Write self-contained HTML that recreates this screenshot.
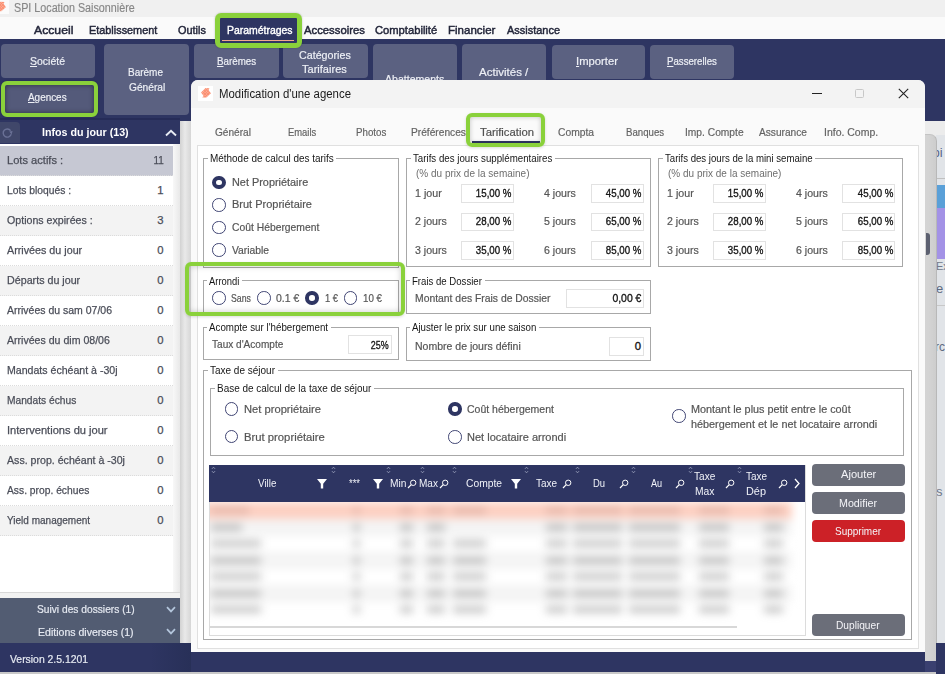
<!DOCTYPE html>
<html><head><meta charset="utf-8"><style>
html,body{margin:0;padding:0;width:945px;height:674px;overflow:hidden;}
body{position:relative;font-family:"Liberation Sans",sans-serif;}
body div, body svg{position:absolute;}
.t{white-space:nowrap;}
.r{width:13.5px;height:13.5px;box-sizing:border-box;border:1.5px solid #3f4473;border-radius:50%;background:#fff;}
.r.c{border:4px solid #2e3562;background:#fff;}
u{text-decoration:underline;text-underline-offset:1px;text-decoration-thickness:1px;}
</style></head><body>
<div style="left:0px;top:0px;width:945px;height:674px;background:#2e3562"></div>
<div style="left:0px;top:0px;width:945px;height:17px;background:#f0f0f0"></div>
<div style="left:0px;top:0px;width:8.5px;height:13.5px;background:#fbfbfb"></div>
<div class="t" style="left:14.3px;top:1.94px;font-size:12px;line-height:12px;transform:scaleX(0.8957);transform-origin:left center;color:#868686;-webkit-text-stroke:0.15px #868686">SPI Location Saisonnière</div>
<div style="left:0px;top:17px;width:945px;height:22px;background:#fafafa"></div>
<div class="t" style="left:34px;top:24.83px;font-size:11.3px;line-height:11.3px;transform:scaleX(1.0816);transform-origin:left center;color:#23263a;-webkit-text-stroke:0.45px #23263a">Accueil</div>
<div class="t" style="left:88.5px;top:24.83px;font-size:11.3px;line-height:11.3px;transform:scaleX(0.9623);transform-origin:left center;color:#23263a;-webkit-text-stroke:0.45px #23263a">Etablissement</div>
<div class="t" style="left:177.8px;top:24.83px;font-size:11.3px;line-height:11.3px;transform:scaleX(0.9659);transform-origin:left center;color:#23263a;-webkit-text-stroke:0.45px #23263a">Outils</div>
<div class="t" style="left:303.5px;top:24.83px;font-size:11.3px;line-height:11.3px;transform:scaleX(0.9998);transform-origin:left center;color:#23263a;-webkit-text-stroke:0.45px #23263a">Accessoires</div>
<div class="t" style="left:374.5px;top:24.83px;font-size:11.3px;line-height:11.3px;transform:scaleX(0.9904);transform-origin:left center;color:#23263a;-webkit-text-stroke:0.45px #23263a">Comptabilité</div>
<div class="t" style="left:447.6px;top:24.83px;font-size:11.3px;line-height:11.3px;transform:scaleX(1.0199);transform-origin:left center;color:#23263a;-webkit-text-stroke:0.45px #23263a">Financier</div>
<div class="t" style="left:507px;top:24.83px;font-size:11.3px;line-height:11.3px;transform:scaleX(0.9700);transform-origin:left center;color:#23263a;-webkit-text-stroke:0.45px #23263a">Assistance</div>
<div style="left:219px;top:17px;width:78.5px;height:26.5px;background:#2e3562"></div>
<div style="left:222px;top:39.5px;width:72px;height:1.5px;background:#f2a98c"></div>
<div class="t" style="left:227px;top:24.83px;font-size:11.3px;line-height:11.3px;transform:scaleX(0.9243);transform-origin:left center;color:#fff;-webkit-text-stroke:0.4px #fff">Paramétrages</div>
<div style="left:1px;top:44px;width:94px;height:34px;background:#5b6181;border-radius:4px;"></div>
<div class="t" style="left:29.6px;top:56.01px;font-size:11.8px;line-height:11.8px;transform:scaleX(0.8893);transform-origin:left center;color:#eef0f6;-webkit-text-stroke:0.2px #eef0f6"><u>S</u>ociété</div>
<div style="left:5px;top:85px;width:88.5px;height:28px;background:#5b6181;border-radius:4px;background:#545a7a;box-shadow:inset 0 0 5px rgba(0,0,0,.45)"></div>
<div class="t" style="left:28.1px;top:92.41px;font-size:11.8px;line-height:11.8px;transform:scaleX(0.8406);transform-origin:left center;color:#eef0f6;-webkit-text-stroke:0.2px #eef0f6"><u>A</u>gences</div>
<div style="left:104px;top:44px;width:85px;height:71px;background:#5b6181;border-radius:4px;"></div>
<div class="t" style="left:128px;top:67.31px;font-size:11.8px;line-height:11.8px;transform:scaleX(0.8471);transform-origin:left center;color:#eef0f6;-webkit-text-stroke:0.2px #eef0f6">Barème</div>
<div class="t" style="left:128.7px;top:82.11px;font-size:11.8px;line-height:11.8px;transform:scaleX(0.8647);transform-origin:left center;color:#eef0f6;-webkit-text-stroke:0.2px #eef0f6">Général</div>
<div style="left:194px;top:44px;width:84.5px;height:34px;background:#5b6181;border-radius:4px;"></div>
<div class="t" style="left:216.5px;top:55.51px;font-size:11.8px;line-height:11.8px;transform:scaleX(0.8281);transform-origin:left center;color:#eef0f6;-webkit-text-stroke:0.2px #eef0f6"><u>B</u>arèmes</div>
<div style="left:283px;top:44px;width:85px;height:34px;background:#5b6181;border-radius:4px;"></div>
<div class="t" style="left:299px;top:50.01px;font-size:11.8px;line-height:11.8px;transform:scaleX(0.9078);transform-origin:left center;color:#eef0f6;-webkit-text-stroke:0.2px #eef0f6">Catégories</div>
<div class="t" style="left:302.2px;top:64.41px;font-size:11.8px;line-height:11.8px;transform:scaleX(0.9359);transform-origin:left center;color:#eef0f6;-webkit-text-stroke:0.2px #eef0f6">Tarifaires</div>
<div style="left:373px;top:44px;width:84px;height:76px;background:#5b6181;border-radius:4px;"></div>
<div class="t" style="left:385.2px;top:74.31px;font-size:11.8px;line-height:11.8px;transform:scaleX(0.8951);transform-origin:left center;color:#eef0f6;-webkit-text-stroke:0.2px #eef0f6">Abattements</div>
<div style="left:462px;top:44px;width:84px;height:76px;background:#5b6181;border-radius:4px;"></div>
<div class="t" style="left:479px;top:66.71px;font-size:11.8px;line-height:11.8px;transform:scaleX(0.9764);transform-origin:left center;color:#eef0f6;-webkit-text-stroke:0.2px #eef0f6">Activités /</div>
<div style="left:551.5px;top:45px;width:93.5px;height:33.5px;background:#5b6181;border-radius:4px;"></div>
<div class="t" style="left:576.2px;top:56.41px;font-size:11.8px;line-height:11.8px;transform:scaleX(0.9537);transform-origin:left center;color:#eef0f6;-webkit-text-stroke:0.2px #eef0f6"><u>I</u>mporter</div>
<div style="left:649.5px;top:45px;width:84.79999999999995px;height:33.5px;background:#5b6181;border-radius:4px;"></div>
<div class="t" style="left:666.7px;top:56.41px;font-size:11.8px;line-height:11.8px;transform:scaleX(0.8181);transform-origin:left center;color:#eef0f6;-webkit-text-stroke:0.2px #eef0f6"><u>P</u>asserelles</div>
<div style="left:0px;top:121px;width:179.5px;height:22.5px;background:#2e3562"></div>
<div style="left:0px;top:118px;width:179.5px;height:2px;background:#262c58"></div>
<div style="left:0px;top:122px;width:19.7px;height:20.599999999999994px;background:#40476a;border-radius:0 4px 0 0"></div>
<svg style="position:absolute;left:2px;top:128px" width="12" height="11" viewBox="0 0 12 11"><path d="M9.2 6.3 A4.1 4.1 0 1 1 8.6 2.6" fill="none" stroke="#6a7196" stroke-width="1.4"/><path d="M7.2 3.6 L10.6 3 L9.6 6.6 Z" fill="#6a7196"/></svg>
<div class="t" style="left:41.5px;top:125.78px;font-size:11.6px;line-height:11.6px;transform:scaleX(0.9215);transform-origin:left center;color:#fff;font-weight:bold">Infos du jour (13)</div>
<svg style="position:absolute;left:165px;top:128.5px" width="12" height="8" viewBox="0 0 12 8"><path d="M1 6.5 L6 1.8 L11 6.5" fill="none" stroke="#e8ecf4" stroke-width="1.9"/></svg>
<div style="left:179.5px;top:121px;width:11.0px;height:522px;background:linear-gradient(90deg,#d2d2d2,#e9e9e9 45%,#d6d6d6)"></div>
<div style="left:0px;top:143.5px;width:179.5px;height:454.5px;background:#ffffff"></div>
<div style="left:0px;top:145.5px;width:172.5px;height:30.0px;background:#c6c8d3"></div>
<div style="left:0px;top:175.0px;width:172.5px;height:1.0px;border-top:1px dotted #dcdcdc;box-sizing:border-box"></div>
<div class="t" style="left:6.7px;top:155.23px;font-size:11.3px;line-height:11.3px;transform:scaleX(0.9833);transform-origin:left center;color:#4a4d58;-webkit-text-stroke:0.25px #4a4d58">Lots actifs :</div>
<div class="t" style="right:781.5px;top:155.23px;font-size:11.3px;line-height:11.3px;text-align:right;transform:scaleX(0.8781);transform-origin:right center;color:#4a4d58;-webkit-text-stroke:0.25px #4a4d58">11</div>
<div style="left:0px;top:175.5px;width:172.5px;height:30.0px;background:#ffffff"></div>
<div style="left:0px;top:205.0px;width:172.5px;height:1.0px;border-top:1px dotted #dcdcdc;box-sizing:border-box"></div>
<div class="t" style="left:6.7px;top:185.23px;font-size:11.3px;line-height:11.3px;transform:scaleX(0.9125);transform-origin:left center;color:#4a4d58;-webkit-text-stroke:0.25px #4a4d58">Lots bloqués :</div>
<div class="t" style="right:781.5px;top:185.23px;font-size:11.3px;line-height:11.3px;text-align:right;color:#4a4d58;-webkit-text-stroke:0.25px #4a4d58">1</div>
<div style="left:0px;top:205.5px;width:172.5px;height:30.0px;background:#f3f3f3"></div>
<div style="left:0px;top:235.0px;width:172.5px;height:1.0px;border-top:1px dotted #dcdcdc;box-sizing:border-box"></div>
<div class="t" style="left:6.7px;top:215.23px;font-size:11.3px;line-height:11.3px;transform:scaleX(0.9410);transform-origin:left center;color:#4a4d58;-webkit-text-stroke:0.25px #4a4d58">Options expirées :</div>
<div class="t" style="right:781.5px;top:215.23px;font-size:11.3px;line-height:11.3px;text-align:right;color:#4a4d58;-webkit-text-stroke:0.25px #4a4d58">3</div>
<div style="left:0px;top:235.5px;width:172.5px;height:30.0px;background:#ffffff"></div>
<div style="left:0px;top:265.0px;width:172.5px;height:1.0px;border-top:1px dotted #dcdcdc;box-sizing:border-box"></div>
<div class="t" style="left:6.7px;top:245.23px;font-size:11.3px;line-height:11.3px;transform:scaleX(0.9503);transform-origin:left center;color:#4a4d58;-webkit-text-stroke:0.25px #4a4d58">Arrivées du jour</div>
<div class="t" style="right:781.5px;top:245.23px;font-size:11.3px;line-height:11.3px;text-align:right;color:#4a4d58;-webkit-text-stroke:0.25px #4a4d58">0</div>
<div style="left:0px;top:265.5px;width:172.5px;height:30.0px;background:#f3f3f3"></div>
<div style="left:0px;top:295.0px;width:172.5px;height:1.0px;border-top:1px dotted #dcdcdc;box-sizing:border-box"></div>
<div class="t" style="left:6.7px;top:275.23px;font-size:11.3px;line-height:11.3px;transform:scaleX(0.9475);transform-origin:left center;color:#4a4d58;-webkit-text-stroke:0.25px #4a4d58">Départs du jour</div>
<div class="t" style="right:781.5px;top:275.23px;font-size:11.3px;line-height:11.3px;text-align:right;color:#4a4d58;-webkit-text-stroke:0.25px #4a4d58">0</div>
<div style="left:0px;top:295.5px;width:172.5px;height:30.0px;background:#ffffff"></div>
<div style="left:0px;top:325.0px;width:172.5px;height:1.0px;border-top:1px dotted #dcdcdc;box-sizing:border-box"></div>
<div class="t" style="left:6.7px;top:305.23px;font-size:11.3px;line-height:11.3px;transform:scaleX(0.9288);transform-origin:left center;color:#4a4d58;-webkit-text-stroke:0.25px #4a4d58">Arrivées du sam 07/06</div>
<div class="t" style="right:781.5px;top:305.23px;font-size:11.3px;line-height:11.3px;text-align:right;color:#4a4d58;-webkit-text-stroke:0.25px #4a4d58">0</div>
<div style="left:0px;top:325.5px;width:172.5px;height:30.0px;background:#f3f3f3"></div>
<div style="left:0px;top:355.0px;width:172.5px;height:1.0px;border-top:1px dotted #dcdcdc;box-sizing:border-box"></div>
<div class="t" style="left:6.7px;top:335.23px;font-size:11.3px;line-height:11.3px;transform:scaleX(0.9362);transform-origin:left center;color:#4a4d58;-webkit-text-stroke:0.25px #4a4d58">Arrivées du dim 08/06</div>
<div class="t" style="right:781.5px;top:335.23px;font-size:11.3px;line-height:11.3px;text-align:right;color:#4a4d58;-webkit-text-stroke:0.25px #4a4d58">0</div>
<div style="left:0px;top:355.5px;width:172.5px;height:30.0px;background:#ffffff"></div>
<div style="left:0px;top:385.0px;width:172.5px;height:1.0px;border-top:1px dotted #dcdcdc;box-sizing:border-box"></div>
<div class="t" style="left:6.7px;top:365.23px;font-size:11.3px;line-height:11.3px;transform:scaleX(0.9365);transform-origin:left center;color:#4a4d58;-webkit-text-stroke:0.25px #4a4d58">Mandats échéant à -30j</div>
<div class="t" style="right:781.5px;top:365.23px;font-size:11.3px;line-height:11.3px;text-align:right;color:#4a4d58;-webkit-text-stroke:0.25px #4a4d58">0</div>
<div style="left:0px;top:385.5px;width:172.5px;height:30.0px;background:#f3f3f3"></div>
<div style="left:0px;top:415.0px;width:172.5px;height:1.0px;border-top:1px dotted #dcdcdc;box-sizing:border-box"></div>
<div class="t" style="left:6.7px;top:395.23px;font-size:11.3px;line-height:11.3px;transform:scaleX(0.9043);transform-origin:left center;color:#4a4d58;-webkit-text-stroke:0.25px #4a4d58">Mandats échus</div>
<div class="t" style="right:781.5px;top:395.23px;font-size:11.3px;line-height:11.3px;text-align:right;color:#4a4d58;-webkit-text-stroke:0.25px #4a4d58">0</div>
<div style="left:0px;top:415.5px;width:172.5px;height:30.0px;background:#ffffff"></div>
<div style="left:0px;top:445.0px;width:172.5px;height:1.0px;border-top:1px dotted #dcdcdc;box-sizing:border-box"></div>
<div class="t" style="left:6.7px;top:425.23px;font-size:11.3px;line-height:11.3px;transform:scaleX(0.9825);transform-origin:left center;color:#4a4d58;-webkit-text-stroke:0.25px #4a4d58">Interventions du jour</div>
<div class="t" style="right:781.5px;top:425.23px;font-size:11.3px;line-height:11.3px;text-align:right;color:#4a4d58;-webkit-text-stroke:0.25px #4a4d58">0</div>
<div style="left:0px;top:445.5px;width:172.5px;height:30.0px;background:#f3f3f3"></div>
<div style="left:0px;top:475.0px;width:172.5px;height:1.0px;border-top:1px dotted #dcdcdc;box-sizing:border-box"></div>
<div class="t" style="left:6.7px;top:455.23px;font-size:11.3px;line-height:11.3px;transform:scaleX(0.9393);transform-origin:left center;color:#4a4d58;-webkit-text-stroke:0.25px #4a4d58">Ass. prop. échéant à -30j</div>
<div class="t" style="right:781.5px;top:455.23px;font-size:11.3px;line-height:11.3px;text-align:right;color:#4a4d58;-webkit-text-stroke:0.25px #4a4d58">0</div>
<div style="left:0px;top:475.5px;width:172.5px;height:30.0px;background:#ffffff"></div>
<div style="left:0px;top:505.0px;width:172.5px;height:1.0px;border-top:1px dotted #dcdcdc;box-sizing:border-box"></div>
<div class="t" style="left:6.7px;top:485.23px;font-size:11.3px;line-height:11.3px;transform:scaleX(0.9099);transform-origin:left center;color:#4a4d58;-webkit-text-stroke:0.25px #4a4d58">Ass. prop. échues</div>
<div class="t" style="right:781.5px;top:485.23px;font-size:11.3px;line-height:11.3px;text-align:right;color:#4a4d58;-webkit-text-stroke:0.25px #4a4d58">0</div>
<div style="left:0px;top:505.5px;width:172.5px;height:30.0px;background:#f3f3f3"></div>
<div style="left:0px;top:535.0px;width:172.5px;height:1.0px;border-top:1px dotted #dcdcdc;box-sizing:border-box"></div>
<div class="t" style="left:6.7px;top:515.23px;font-size:11.3px;line-height:11.3px;transform:scaleX(0.8859);transform-origin:left center;color:#4a4d58;-webkit-text-stroke:0.25px #4a4d58">Yield management</div>
<div class="t" style="right:781.5px;top:515.23px;font-size:11.3px;line-height:11.3px;text-align:right;color:#4a4d58;-webkit-text-stroke:0.25px #4a4d58">0</div>
<div style="left:172.5px;top:143.5px;width:7.0px;height:448.5px;background:linear-gradient(90deg,#f8f8f8,#e8e8e8)"></div>
<div style="left:0px;top:592px;width:179.5px;height:1px;background:#d8d8d8"></div>
<div style="left:0px;top:593px;width:179.5px;height:5px;background:#f2f2f2"></div>
<div style="left:0px;top:598px;width:179.5px;height:45px;background:#525c72"></div>
<div class="t" style="left:36.6px;top:603.48px;font-size:11.6px;line-height:11.6px;transform:scaleX(0.8811);transform-origin:left center;color:#e6eaf2;-webkit-text-stroke:0.2px #e6eaf2">Suivi des dossiers (1)</div>
<div class="t" style="left:37.7px;top:626.38px;font-size:11.6px;line-height:11.6px;transform:scaleX(0.9098);transform-origin:left center;color:#e6eaf2;-webkit-text-stroke:0.2px #e6eaf2">Editions diverses (1)</div>
<svg style="position:absolute;left:165.5px;top:605.5px" width="10" height="7" viewBox="0 0 10 7"><path d="M1 1.2 L5 5.4 L9 1.2" fill="none" stroke="#b4c6dc" stroke-width="1.7"/></svg>
<svg style="position:absolute;left:165.5px;top:628px" width="10" height="7" viewBox="0 0 10 7"><path d="M1 1.2 L5 5.4 L9 1.2" fill="none" stroke="#b4c6dc" stroke-width="1.7"/></svg>
<div style="left:0px;top:643px;width:945px;height:29.299999999999955px;background:#2e3562"></div>
<div style="left:150px;top:643px;width:40.5px;height:29.299999999999955px;background:linear-gradient(90deg,#2e3562,#283058)"></div>
<div style="left:0px;top:672.3px;width:945px;height:1.7000000000000455px;background:#c8c8c8"></div>
<div class="t" style="left:9.5px;top:653.18px;font-size:11.6px;line-height:11.6px;transform:scaleX(0.8970);transform-origin:left center;color:#e6eaf2;-webkit-text-stroke:0.2px #e6eaf2">Version 2.5.1201</div>
<div style="left:924.5px;top:121px;width:20.5px;height:522px;background:#ececec"></div>
<div style="left:936px;top:135px;width:9px;height:508px;background:#e1e4e8"></div>
<div class="t" style="left:932.5px;top:145.50px;font-size:13px;line-height:13px;color:#56648a">pi</div>
<div style="left:936px;top:178px;width:9px;height:1px;background:#c0c0c0"></div>
<div style="left:936px;top:185px;width:9px;height:23px;background:#5aa0d8"></div>
<div style="left:936px;top:208px;width:9px;height:51px;background:#a392e6"></div>
<div class="t" style="left:936px;top:261.19px;font-size:11px;line-height:11px;color:#707888">Ex</div>
<div class="t" style="left:936px;top:281.50px;font-size:13px;line-height:13px;color:#606a80">e</div>
<div style="left:936px;top:305px;width:9px;height:1px;background:#c8c8c8"></div>
<div class="t" style="left:935px;top:340.84px;font-size:12px;line-height:12px;color:#606a80">rc</div>
<div class="t" style="left:936px;top:485.00px;font-size:13px;line-height:13px;color:#707888">s</div>
<div style="left:924.5px;top:133.5px;width:12.0px;height:527.5px;background:linear-gradient(90deg,#d4d4d4,#d2d2d2 50%,#cdcdcd);border-top:1px solid #c4c4c4;border-right:1px solid #b8b8b8;box-sizing:border-box;border-radius:0 7px 0 0"></div>
<div style="left:925.5px;top:232.5px;width:4.5px;height:22.5px;background:#5c6070;border-radius:0 3px 3px 0"></div>
<div style="left:936px;top:643px;width:9px;height:31px;background:#2e3562"></div>
<div style="left:925px;top:661px;width:11px;height:11px;background:#3a4070"></div>
<div style="left:190.5px;top:79.5px;width:734.0px;height:572.8px;background:#fafafa;border-radius:7px 7px 0 0"></div>
<div style="left:190.5px;top:79.5px;width:734.0px;height:28.0px;background:#f3f3f3;border-radius:7px 7px 0 0"></div>
<div style="left:198px;top:85.5px;width:15px;height:15.0px;background:#ffffff"></div>
<svg style="position:absolute;left:0;top:0" width="945" height="674"><defs><pattern id="chk" width="2" height="2" patternUnits="userSpaceOnUse" patternTransform="rotate(45)"><rect width="2" height="2" fill="#fb8e70"/><rect width="1" height="1" fill="#fdc2b0"/></pattern></defs><polygon points="205.50,88.00 209.60,88.30 208.50,90.10 211.00,93.30 206.40,97.60 202.30,97.40 203.50,95.70 201.00,92.50" fill="url(#chk)"/><polygon points="0.50,1.70 4.60,2.00 3.50,3.80 6.00,7.00 1.40,11.30 -2.70,11.10 -1.50,9.40 -4.00,6.20" fill="url(#chk)"/></svg>
<div class="t" style="left:218.5px;top:87.69px;font-size:12.3px;line-height:12.3px;transform:scaleX(0.9261);transform-origin:left center;color:#1b1b1b">Modification d'une agence</div>
<div style="left:812px;top:93px;width:10px;height:1.2000000000000028px;background:#222"></div>
<div style="left:855px;top:88.5px;width:9px;height:9.299999999999997px;border:1px solid #c8c8c8;border-radius:1.5px;box-sizing:border-box"></div>
<svg style="position:absolute;left:897.5px;top:88px" width="11" height="11" viewBox="0 0 11 11"><path d="M0.8 0.8 L10.2 10.2 M10.2 0.8 L0.8 10.2" stroke="#222" stroke-width="1.1"/></svg>
<div class="t" style="left:215.4px;top:126.48px;font-size:11.6px;line-height:11.6px;transform:scaleX(0.8724);transform-origin:left center;color:#636363;-webkit-text-stroke:0.2px #636363">Général</div>
<div class="t" style="left:287.8px;top:126.48px;font-size:11.6px;line-height:11.6px;transform:scaleX(0.8102);transform-origin:left center;color:#636363;-webkit-text-stroke:0.2px #636363">Emails</div>
<div class="t" style="left:355.5px;top:126.48px;font-size:11.6px;line-height:11.6px;transform:scaleX(0.8390);transform-origin:left center;color:#636363;-webkit-text-stroke:0.2px #636363">Photos</div>
<div class="t" style="left:411px;top:126.48px;font-size:11.6px;line-height:11.6px;transform:scaleX(0.8794);transform-origin:left center;color:#636363;-webkit-text-stroke:0.2px #636363">Préférences</div>
<div class="t" style="left:558px;top:126.48px;font-size:11.6px;line-height:11.6px;transform:scaleX(0.8864);transform-origin:left center;color:#636363;-webkit-text-stroke:0.2px #636363">Compta</div>
<div class="t" style="left:626.4px;top:126.48px;font-size:11.6px;line-height:11.6px;transform:scaleX(0.8320);transform-origin:left center;color:#636363;-webkit-text-stroke:0.2px #636363">Banques</div>
<div class="t" style="left:684.8px;top:126.48px;font-size:11.6px;line-height:11.6px;transform:scaleX(0.8826);transform-origin:left center;color:#636363;-webkit-text-stroke:0.2px #636363">Imp. Compte</div>
<div class="t" style="left:758.8px;top:126.48px;font-size:11.6px;line-height:11.6px;transform:scaleX(0.8759);transform-origin:left center;color:#636363;-webkit-text-stroke:0.2px #636363">Assurance</div>
<div class="t" style="left:823.7px;top:126.48px;font-size:11.6px;line-height:11.6px;transform:scaleX(0.9040);transform-origin:left center;color:#636363;-webkit-text-stroke:0.2px #636363">Info. Comp.</div>
<div style="left:471.5px;top:141px;width:68.5px;height:2px;background:#2e3562"></div>
<div class="t" style="left:480px;top:125.88px;font-size:11.6px;line-height:11.6px;transform:scaleX(0.9740);transform-origin:left center;color:#505050;-webkit-text-stroke:0.2px #505050">Tarification</div>
<div style="left:196.5px;top:145px;width:722.5px;height:503.5px;border:1px solid #e0e0e0;box-sizing:border-box;background:#fff"></div>
<div style="left:202.5px;top:157.5px;width:196.5px;height:110.0px;border:1px solid #a8a8a8;box-sizing:border-box"></div>
<div style="left:207.5px;top:156.5px;width:128.8px;height:3.0px;background:#fff"></div>
<div class="t" style="left:209.5px;top:152.18px;font-size:11.6px;line-height:11.6px;transform:scaleX(0.8572);transform-origin:left center;color:#161616">Méthode de calcul des tarifs</div>
<div class="r c" style="left:212.25px;top:175.65px"></div>
<div class="t" style="left:231.7px;top:176.83px;font-size:11.3px;line-height:11.3px;transform:scaleX(0.9630);transform-origin:left center;color:#555;-webkit-text-stroke:0.2px #555">Net Propriétaire</div>
<div class="r" style="left:212.25px;top:198.25px"></div>
<div class="t" style="left:231.7px;top:199.43px;font-size:11.3px;line-height:11.3px;transform:scaleX(0.9724);transform-origin:left center;color:#555;-webkit-text-stroke:0.2px #555">Brut Propriétaire</div>
<div class="r" style="left:212.25px;top:220.85000000000002px"></div>
<div class="t" style="left:231.7px;top:222.03px;font-size:11.3px;line-height:11.3px;transform:scaleX(0.9144);transform-origin:left center;color:#555;-webkit-text-stroke:0.2px #555">Coût Hébergement</div>
<div class="r" style="left:212.25px;top:243.45000000000002px"></div>
<div class="t" style="left:231.7px;top:244.63px;font-size:11.3px;line-height:11.3px;transform:scaleX(0.9134);transform-origin:left center;color:#555;-webkit-text-stroke:0.2px #555">Variable</div>
<div style="left:202.5px;top:280px;width:196.5px;height:33.5px;border:1px solid #a8a8a8;box-sizing:border-box"></div>
<div style="left:206.9px;top:279px;width:35.29999999999998px;height:3px;background:#fff"></div>
<div class="t" style="left:208.9px;top:274.58px;font-size:11.6px;line-height:11.6px;transform:scaleX(0.8103);transform-origin:left center;color:#161616">Arrondi</div>
<div class="r" style="left:212.25px;top:291.15px"></div>
<div class="t" style="left:231.3px;top:292.73px;font-size:11.3px;line-height:11.3px;transform:scaleX(0.7726);transform-origin:left center;color:#555;-webkit-text-stroke:0.2px #555">Sans</div>
<div class="r" style="left:257.15px;top:291.15px"></div>
<div class="t" style="left:276.2px;top:292.73px;font-size:11.3px;line-height:11.3px;transform:scaleX(0.9271);transform-origin:left center;color:#555;-webkit-text-stroke:0.2px #555">0.1 €</div>
<div class="r c" style="left:305.45px;top:291.15px"></div>
<div class="t" style="left:324.9px;top:292.73px;font-size:11.3px;line-height:11.3px;transform:scaleX(0.8340);transform-origin:left center;color:#555;-webkit-text-stroke:0.2px #555">1 €</div>
<div class="r" style="left:343.95px;top:291.15px"></div>
<div class="t" style="left:363.4px;top:292.73px;font-size:11.3px;line-height:11.3px;transform:scaleX(0.8639);transform-origin:left center;color:#555;-webkit-text-stroke:0.2px #555">10 €</div>
<div style="left:202.5px;top:326.8px;width:196.5px;height:33.69999999999999px;border:1px solid #a8a8a8;box-sizing:border-box"></div>
<div style="left:206.9px;top:325.8px;width:124.1px;height:3.0px;background:#fff"></div>
<div class="t" style="left:208.9px;top:321.18px;font-size:11.6px;line-height:11.6px;transform:scaleX(0.8418);transform-origin:left center;color:#161616">Acompte sur l'hébergement</div>
<div class="t" style="left:212.3px;top:338.83px;font-size:11.3px;line-height:11.3px;transform:scaleX(0.8908);transform-origin:left center;color:#555;-webkit-text-stroke:0.2px #555">Taux d'Acompte</div>
<div style="left:348.2px;top:334.8px;width:43.400000000000034px;height:19.0px;background:#fff;border:1px solid #e2e2e2;box-sizing:border-box"></div>
<div class="t" style="right:556.2px;top:339.63px;font-size:11.3px;line-height:11.3px;text-align:right;transform:scaleX(0.7871);transform-origin:right center;color:#161616;-webkit-text-stroke:0.35px #161616">25%</div>
<div style="left:405.8px;top:158.2px;width:245.2px;height:109.30000000000001px;border:1px solid #a8a8a8;box-sizing:border-box"></div>
<div style="left:410.6px;top:157.2px;width:144.39999999999998px;height:3.0px;background:#fff"></div>
<div class="t" style="left:412.6px;top:151.68px;font-size:11.6px;line-height:11.6px;transform:scaleX(0.8381);transform-origin:left center;color:#161616">Tarifs des jours supplémentaires</div>
<div class="t" style="left:415.5px;top:167.73px;font-size:11.3px;line-height:11.3px;transform:scaleX(0.8859);transform-origin:left center;color:#6e6e6e">(% du prix de la semaine)</div>
<div class="t" style="left:415.3px;top:187.53px;font-size:11.3px;line-height:11.3px;transform:scaleX(0.9446);transform-origin:left center;color:#555;-webkit-text-stroke:0.2px #555">1 jour</div>
<div style="left:461.2px;top:184.0px;width:52.50000000000006px;height:18.80000000000001px;background:#fff;border:1px solid #e2e2e2;box-sizing:border-box"></div>
<div class="t" style="right:433.3px;top:187.73px;font-size:11.3px;line-height:11.3px;text-align:right;transform:scaleX(0.8586);transform-origin:right center;color:#161616;-webkit-text-stroke:0.35px #161616">15,00 %</div>
<div class="t" style="left:544.3px;top:187.53px;font-size:11.3px;line-height:11.3px;transform:scaleX(0.9376);transform-origin:left center;color:#555;-webkit-text-stroke:0.2px #555">4 jours</div>
<div style="left:590.6px;top:184.0px;width:53.0px;height:18.80000000000001px;background:#fff;border:1px solid #e2e2e2;box-sizing:border-box"></div>
<div class="t" style="right:303.4px;top:187.73px;font-size:11.3px;line-height:11.3px;text-align:right;transform:scaleX(0.8586);transform-origin:right center;color:#161616;-webkit-text-stroke:0.35px #161616">45,00 %</div>
<div class="t" style="left:415.3px;top:216.03px;font-size:11.3px;line-height:11.3px;transform:scaleX(0.9376);transform-origin:left center;color:#555;-webkit-text-stroke:0.2px #555">2 jours</div>
<div style="left:461.2px;top:212.5px;width:52.50000000000006px;height:18.80000000000001px;background:#fff;border:1px solid #e2e2e2;box-sizing:border-box"></div>
<div class="t" style="right:433.3px;top:216.23px;font-size:11.3px;line-height:11.3px;text-align:right;transform:scaleX(0.8586);transform-origin:right center;color:#161616;-webkit-text-stroke:0.35px #161616">28,00 %</div>
<div class="t" style="left:544.3px;top:216.03px;font-size:11.3px;line-height:11.3px;transform:scaleX(0.9376);transform-origin:left center;color:#555;-webkit-text-stroke:0.2px #555">5 jours</div>
<div style="left:590.6px;top:212.5px;width:53.0px;height:18.80000000000001px;background:#fff;border:1px solid #e2e2e2;box-sizing:border-box"></div>
<div class="t" style="right:303.4px;top:216.23px;font-size:11.3px;line-height:11.3px;text-align:right;transform:scaleX(0.8586);transform-origin:right center;color:#161616;-webkit-text-stroke:0.35px #161616">65,00 %</div>
<div class="t" style="left:415.3px;top:244.53px;font-size:11.3px;line-height:11.3px;transform:scaleX(0.9376);transform-origin:left center;color:#555;-webkit-text-stroke:0.2px #555">3 jours</div>
<div style="left:461.2px;top:241.0px;width:52.50000000000006px;height:18.80000000000001px;background:#fff;border:1px solid #e2e2e2;box-sizing:border-box"></div>
<div class="t" style="right:433.3px;top:244.73px;font-size:11.3px;line-height:11.3px;text-align:right;transform:scaleX(0.8586);transform-origin:right center;color:#161616;-webkit-text-stroke:0.35px #161616">35,00 %</div>
<div class="t" style="left:544.3px;top:244.53px;font-size:11.3px;line-height:11.3px;transform:scaleX(0.9376);transform-origin:left center;color:#555;-webkit-text-stroke:0.2px #555">6 jours</div>
<div style="left:590.6px;top:241.0px;width:53.0px;height:18.80000000000001px;background:#fff;border:1px solid #e2e2e2;box-sizing:border-box"></div>
<div class="t" style="right:303.4px;top:244.73px;font-size:11.3px;line-height:11.3px;text-align:right;transform:scaleX(0.8586);transform-origin:right center;color:#161616;-webkit-text-stroke:0.35px #161616">85,00 %</div>
<div style="left:657.5px;top:158.2px;width:245.5px;height:109.30000000000001px;border:1px solid #a8a8a8;box-sizing:border-box"></div>
<div style="left:662.7px;top:157.2px;width:152.69999999999993px;height:3.0px;background:#fff"></div>
<div class="t" style="left:664.7px;top:151.68px;font-size:11.6px;line-height:11.6px;transform:scaleX(0.8301);transform-origin:left center;color:#161616">Tarifs des jours de la mini semaine</div>
<div class="t" style="left:667.6px;top:167.73px;font-size:11.3px;line-height:11.3px;transform:scaleX(0.8851);transform-origin:left center;color:#6e6e6e">(% du prix de la semaine)</div>
<div class="t" style="left:667.0px;top:187.53px;font-size:11.3px;line-height:11.3px;transform:scaleX(0.9446);transform-origin:left center;color:#555;-webkit-text-stroke:0.2px #555">1 jour</div>
<div style="left:713.2px;top:184.0px;width:52.5px;height:18.80000000000001px;background:#fff;border:1px solid #e2e2e2;box-sizing:border-box"></div>
<div class="t" style="right:181.29999999999995px;top:187.73px;font-size:11.3px;line-height:11.3px;text-align:right;transform:scaleX(0.8586);transform-origin:right center;color:#161616;-webkit-text-stroke:0.35px #161616">15,00 %</div>
<div class="t" style="left:796.4px;top:187.53px;font-size:11.3px;line-height:11.3px;transform:scaleX(0.9376);transform-origin:left center;color:#555;-webkit-text-stroke:0.2px #555">4 jours</div>
<div style="left:842.3px;top:184.0px;width:53.0px;height:18.80000000000001px;background:#fff;border:1px solid #e2e2e2;box-sizing:border-box"></div>
<div class="t" style="right:51.700000000000045px;top:187.73px;font-size:11.3px;line-height:11.3px;text-align:right;transform:scaleX(0.8586);transform-origin:right center;color:#161616;-webkit-text-stroke:0.35px #161616">45,00 %</div>
<div class="t" style="left:667.0px;top:216.03px;font-size:11.3px;line-height:11.3px;transform:scaleX(0.9376);transform-origin:left center;color:#555;-webkit-text-stroke:0.2px #555">2 jours</div>
<div style="left:713.2px;top:212.5px;width:52.5px;height:18.80000000000001px;background:#fff;border:1px solid #e2e2e2;box-sizing:border-box"></div>
<div class="t" style="right:181.29999999999995px;top:216.23px;font-size:11.3px;line-height:11.3px;text-align:right;transform:scaleX(0.8586);transform-origin:right center;color:#161616;-webkit-text-stroke:0.35px #161616">28,00 %</div>
<div class="t" style="left:796.4px;top:216.03px;font-size:11.3px;line-height:11.3px;transform:scaleX(0.9376);transform-origin:left center;color:#555;-webkit-text-stroke:0.2px #555">5 jours</div>
<div style="left:842.3px;top:212.5px;width:53.0px;height:18.80000000000001px;background:#fff;border:1px solid #e2e2e2;box-sizing:border-box"></div>
<div class="t" style="right:51.700000000000045px;top:216.23px;font-size:11.3px;line-height:11.3px;text-align:right;transform:scaleX(0.8586);transform-origin:right center;color:#161616;-webkit-text-stroke:0.35px #161616">65,00 %</div>
<div class="t" style="left:667.0px;top:244.53px;font-size:11.3px;line-height:11.3px;transform:scaleX(0.9376);transform-origin:left center;color:#555;-webkit-text-stroke:0.2px #555">3 jours</div>
<div style="left:713.2px;top:241.0px;width:52.5px;height:18.80000000000001px;background:#fff;border:1px solid #e2e2e2;box-sizing:border-box"></div>
<div class="t" style="right:181.29999999999995px;top:244.73px;font-size:11.3px;line-height:11.3px;text-align:right;transform:scaleX(0.8586);transform-origin:right center;color:#161616;-webkit-text-stroke:0.35px #161616">35,00 %</div>
<div class="t" style="left:796.4px;top:244.53px;font-size:11.3px;line-height:11.3px;transform:scaleX(0.9376);transform-origin:left center;color:#555;-webkit-text-stroke:0.2px #555">6 jours</div>
<div style="left:842.3px;top:241.0px;width:53.0px;height:18.80000000000001px;background:#fff;border:1px solid #e2e2e2;box-sizing:border-box"></div>
<div class="t" style="right:51.700000000000045px;top:244.73px;font-size:11.3px;line-height:11.3px;text-align:right;transform:scaleX(0.8586);transform-origin:right center;color:#161616;-webkit-text-stroke:0.35px #161616">85,00 %</div>
<div style="left:405.6px;top:280.3px;width:245.39999999999998px;height:34.0px;border:1px solid #a8a8a8;box-sizing:border-box"></div>
<div style="left:410.1px;top:279.3px;width:74.89999999999998px;height:3.0px;background:#fff"></div>
<div class="t" style="left:412.1px;top:274.88px;font-size:11.6px;line-height:11.6px;transform:scaleX(0.8278);transform-origin:left center;color:#161616">Frais de Dossier</div>
<div class="t" style="left:414.8px;top:292.83px;font-size:11.3px;line-height:11.3px;transform:scaleX(0.9181);transform-origin:left center;color:#555;-webkit-text-stroke:0.2px #555">Montant des Frais de Dossier</div>
<div style="left:566.4px;top:288.5px;width:77.39999999999998px;height:19.30000000000001px;background:#fff;border:1px solid #e2e2e2;box-sizing:border-box"></div>
<div class="t" style="right:304px;top:292.63px;font-size:11.3px;line-height:11.3px;text-align:right;transform:scaleX(0.9231);transform-origin:right center;color:#161616;-webkit-text-stroke:0.35px #161616">0,00 €</div>
<div style="left:405.6px;top:326.5px;width:245.39999999999998px;height:34.69999999999999px;border:1px solid #a8a8a8;box-sizing:border-box"></div>
<div style="left:409.8px;top:325.5px;width:129.40000000000003px;height:3.0px;background:#fff"></div>
<div class="t" style="left:411.8px;top:320.58px;font-size:11.6px;line-height:11.6px;transform:scaleX(0.8353);transform-origin:left center;color:#161616">Ajuster le prix sur une saison</div>
<div class="t" style="left:415.2px;top:340.63px;font-size:11.3px;line-height:11.3px;transform:scaleX(0.9307);transform-origin:left center;color:#555;-webkit-text-stroke:0.2px #555">Nombre de jours défini</div>
<div style="left:609.4px;top:336.8px;width:34.39999999999998px;height:19.0px;background:#fff;border:1px solid #e2e2e2;box-sizing:border-box"></div>
<div class="t" style="right:304px;top:340.93px;font-size:11.3px;line-height:11.3px;text-align:right;color:#161616;-webkit-text-stroke:0.35px #161616">0</div>
<div style="left:202.6px;top:369.8px;width:709.6px;height:270.7px;border:1px solid #a8a8a8;box-sizing:border-box"></div>
<div style="left:207.5px;top:368.8px;width:70.0px;height:3.0px;background:#fff"></div>
<div class="t" style="left:209.5px;top:363.98px;font-size:11.6px;line-height:11.6px;transform:scaleX(0.8616);transform-origin:left center;color:#161616">Taxe de séjour</div>
<div style="left:210.1px;top:387.5px;width:694.1999999999999px;height:68.5px;border:1px solid #a8a8a8;box-sizing:border-box"></div>
<div style="left:214.5px;top:386.5px;width:159.5px;height:3.0px;background:#fff"></div>
<div class="t" style="left:216.5px;top:381.88px;font-size:11.6px;line-height:11.6px;transform:scaleX(0.8588);transform-origin:left center;color:#161616">Base de calcul de la taxe de séjour</div>
<div class="r" style="left:224.55px;top:402.05px"></div>
<div class="t" style="left:244px;top:403.73px;font-size:11.3px;line-height:11.3px;transform:scaleX(0.9887);transform-origin:left center;color:#555;-webkit-text-stroke:0.2px #555">Net propriétaire</div>
<div class="r" style="left:224.55px;top:429.95px"></div>
<div class="t" style="left:244px;top:431.63px;font-size:11.3px;line-height:11.3px;transform:scaleX(0.9985);transform-origin:left center;color:#555;-webkit-text-stroke:0.2px #555">Brut propriétaire</div>
<div class="r c" style="left:448.15px;top:402.15px"></div>
<div class="t" style="left:467.4px;top:403.83px;font-size:11.3px;line-height:11.3px;transform:scaleX(0.9285);transform-origin:left center;color:#555;-webkit-text-stroke:0.2px #555">Coût hébergement</div>
<div class="r" style="left:448.15px;top:430.25px"></div>
<div class="t" style="left:467.4px;top:431.83px;font-size:11.3px;line-height:11.3px;transform:scaleX(0.9750);transform-origin:left center;color:#555;-webkit-text-stroke:0.2px #555">Net locataire arrondi</div>
<div class="r" style="left:672.05px;top:409.45px"></div>
<div class="t" style="left:691.4px;top:403.63px;font-size:11.3px;line-height:11.3px;transform:scaleX(0.9594);transform-origin:left center;color:#555;-webkit-text-stroke:0.2px #555">Montant le plus petit entre le coût</div>
<div class="t" style="left:691.4px;top:418.83px;font-size:11.3px;line-height:11.3px;transform:scaleX(0.9598);transform-origin:left center;color:#555;-webkit-text-stroke:0.2px #555">hébergement et le net locataire arrondi</div>
<div style="left:208.5px;top:464.5px;width:597.5px;height:171.0px;background:#fff;border:1px solid #dcdcdc;box-sizing:border-box"></div>
<div style="left:208.5px;top:464.5px;width:596.5px;height:37.0px;background:#2e3562"></div>
<div style="left:209.5px;top:501.8px;width:595px;height:122px;overflow:hidden"><div style="left:-9.5px;top:-11.8px;width:620px;height:140px;filter:blur(4.5px)"><div style="left:0px;top:11.800000000000011px;width:592px;height:17.19999999999999px;background:#fdd0c2"></div><div style="left:0px;top:29px;width:592px;height:16.5px;background:#f4f4f4"></div><div style="left:0px;top:62px;width:592px;height:16.5px;background:#f4f4f4"></div><div style="left:0px;top:95px;width:592px;height:16.5px;background:#f4f4f4"></div><div style="left:11px;top:17.19999999999999px;width:38.400000000000006px;height:7.000000000000057px;background:rgba(150,100,90,.22)"></div><div style="left:253px;top:17.19999999999999px;width:33px;height:7.000000000000057px;background:rgba(150,100,90,.22)"></div><div style="left:200px;top:17.19999999999999px;width:13px;height:7.000000000000057px;background:rgba(150,100,90,.22)"></div><div style="left:227px;top:17.19999999999999px;width:17.69999999999999px;height:7.000000000000057px;background:rgba(150,100,90,.22)"></div><div style="left:346.29999999999995px;top:17.19999999999999px;width:20.600000000000023px;height:7.000000000000057px;background:rgba(150,100,90,.22)"></div><div style="left:373.29999999999995px;top:17.19999999999999px;width:49.200000000000045px;height:7.000000000000057px;background:rgba(150,100,90,.22)"></div><div style="left:428.79999999999995px;top:17.19999999999999px;width:50.80000000000007px;height:7.000000000000057px;background:rgba(150,100,90,.22)"></div><div style="left:498.70000000000005px;top:17.19999999999999px;width:30.09999999999991px;height:7.000000000000057px;background:rgba(150,100,90,.22)"></div><div style="left:563.7px;top:17.19999999999999px;width:19.09999999999991px;height:7.000000000000057px;background:rgba(150,100,90,.22)"></div><div style="left:152.60000000000002px;top:17.19999999999999px;width:7.899999999999977px;height:7.000000000000057px;background:rgba(150,100,90,.22)"></div><div style="left:11px;top:33.700000000000045px;width:30.5px;height:7.0px;background:rgba(100,100,100,.36)"></div><div style="left:200px;top:33.700000000000045px;width:13px;height:7.0px;background:rgba(100,100,100,.36)"></div><div style="left:227px;top:33.700000000000045px;width:17.69999999999999px;height:7.0px;background:rgba(100,100,100,.36)"></div><div style="left:346.29999999999995px;top:33.700000000000045px;width:20.600000000000023px;height:7.0px;background:rgba(100,100,100,.36)"></div><div style="left:373.29999999999995px;top:33.700000000000045px;width:49.200000000000045px;height:7.0px;background:rgba(100,100,100,.36)"></div><div style="left:428.79999999999995px;top:33.700000000000045px;width:50.80000000000007px;height:7.0px;background:rgba(100,100,100,.36)"></div><div style="left:498.70000000000005px;top:33.700000000000045px;width:30.09999999999991px;height:7.0px;background:rgba(100,100,100,.36)"></div><div style="left:563.7px;top:33.700000000000045px;width:19.09999999999991px;height:7.0px;background:rgba(100,100,100,.36)"></div><div style="left:152.60000000000002px;top:33.700000000000045px;width:7.899999999999977px;height:7.0px;background:rgba(100,100,100,.36)"></div><div style="left:11px;top:50.200000000000045px;width:49.5px;height:7.0px;background:rgba(100,100,100,.36)"></div><div style="left:253px;top:50.200000000000045px;width:33px;height:7.0px;background:rgba(100,100,100,.36)"></div><div style="left:200px;top:50.200000000000045px;width:13px;height:7.0px;background:rgba(100,100,100,.36)"></div><div style="left:227px;top:50.200000000000045px;width:17.69999999999999px;height:7.0px;background:rgba(100,100,100,.36)"></div><div style="left:346.29999999999995px;top:50.200000000000045px;width:20.600000000000023px;height:7.0px;background:rgba(100,100,100,.36)"></div><div style="left:373.29999999999995px;top:50.200000000000045px;width:49.200000000000045px;height:7.0px;background:rgba(100,100,100,.36)"></div><div style="left:428.79999999999995px;top:50.200000000000045px;width:50.80000000000007px;height:7.0px;background:rgba(100,100,100,.36)"></div><div style="left:498.70000000000005px;top:50.200000000000045px;width:30.09999999999991px;height:7.0px;background:rgba(100,100,100,.36)"></div><div style="left:563.7px;top:50.200000000000045px;width:19.09999999999991px;height:7.0px;background:rgba(100,100,100,.36)"></div><div style="left:152.60000000000002px;top:50.200000000000045px;width:7.899999999999977px;height:7.0px;background:rgba(100,100,100,.36)"></div><div style="left:11px;top:66.70000000000005px;width:49.5px;height:7.0px;background:rgba(100,100,100,.36)"></div><div style="left:253px;top:66.70000000000005px;width:33px;height:7.0px;background:rgba(100,100,100,.36)"></div><div style="left:200px;top:66.70000000000005px;width:13px;height:7.0px;background:rgba(100,100,100,.36)"></div><div style="left:227px;top:66.70000000000005px;width:17.69999999999999px;height:7.0px;background:rgba(100,100,100,.36)"></div><div style="left:346.29999999999995px;top:66.70000000000005px;width:20.600000000000023px;height:7.0px;background:rgba(100,100,100,.36)"></div><div style="left:373.29999999999995px;top:66.70000000000005px;width:49.200000000000045px;height:7.0px;background:rgba(100,100,100,.36)"></div><div style="left:428.79999999999995px;top:66.70000000000005px;width:50.80000000000007px;height:7.0px;background:rgba(100,100,100,.36)"></div><div style="left:498.70000000000005px;top:66.70000000000005px;width:30.09999999999991px;height:7.0px;background:rgba(100,100,100,.36)"></div><div style="left:563.7px;top:66.70000000000005px;width:19.09999999999991px;height:7.0px;background:rgba(100,100,100,.36)"></div><div style="left:152.60000000000002px;top:66.70000000000005px;width:7.899999999999977px;height:7.0px;background:rgba(100,100,100,.36)"></div><div style="left:11px;top:83.20000000000005px;width:49.5px;height:7.0px;background:rgba(100,100,100,.36)"></div><div style="left:253px;top:83.20000000000005px;width:33px;height:7.0px;background:rgba(100,100,100,.36)"></div><div style="left:200px;top:83.20000000000005px;width:13px;height:7.0px;background:rgba(100,100,100,.36)"></div><div style="left:227px;top:83.20000000000005px;width:17.69999999999999px;height:7.0px;background:rgba(100,100,100,.36)"></div><div style="left:346.29999999999995px;top:83.20000000000005px;width:20.600000000000023px;height:7.0px;background:rgba(100,100,100,.36)"></div><div style="left:373.29999999999995px;top:83.20000000000005px;width:49.200000000000045px;height:7.0px;background:rgba(100,100,100,.36)"></div><div style="left:428.79999999999995px;top:83.20000000000005px;width:50.80000000000007px;height:7.0px;background:rgba(100,100,100,.36)"></div><div style="left:498.70000000000005px;top:83.20000000000005px;width:30.09999999999991px;height:7.0px;background:rgba(100,100,100,.36)"></div><div style="left:563.7px;top:83.20000000000005px;width:19.09999999999991px;height:7.0px;background:rgba(100,100,100,.36)"></div><div style="left:152.60000000000002px;top:83.20000000000005px;width:7.899999999999977px;height:7.0px;background:rgba(100,100,100,.36)"></div><div style="left:11px;top:99.70000000000005px;width:49.5px;height:7.0px;background:rgba(100,100,100,.36)"></div><div style="left:253px;top:99.70000000000005px;width:33px;height:7.0px;background:rgba(100,100,100,.36)"></div><div style="left:200px;top:99.70000000000005px;width:13px;height:7.0px;background:rgba(100,100,100,.36)"></div><div style="left:227px;top:99.70000000000005px;width:17.69999999999999px;height:7.0px;background:rgba(100,100,100,.36)"></div><div style="left:346.29999999999995px;top:99.70000000000005px;width:20.600000000000023px;height:7.0px;background:rgba(100,100,100,.36)"></div><div style="left:373.29999999999995px;top:99.70000000000005px;width:49.200000000000045px;height:7.0px;background:rgba(100,100,100,.36)"></div><div style="left:428.79999999999995px;top:99.70000000000005px;width:50.80000000000007px;height:7.0px;background:rgba(100,100,100,.36)"></div><div style="left:498.70000000000005px;top:99.70000000000005px;width:30.09999999999991px;height:7.0px;background:rgba(100,100,100,.36)"></div><div style="left:563.7px;top:99.70000000000005px;width:19.09999999999991px;height:7.0px;background:rgba(100,100,100,.36)"></div><div style="left:152.60000000000002px;top:99.70000000000005px;width:7.899999999999977px;height:7.0px;background:rgba(100,100,100,.36)"></div><div style="left:11px;top:116.20000000000005px;width:49.5px;height:7.0px;background:rgba(100,100,100,.36)"></div><div style="left:253px;top:116.20000000000005px;width:33px;height:7.0px;background:rgba(100,100,100,.36)"></div><div style="left:200px;top:116.20000000000005px;width:13px;height:7.0px;background:rgba(100,100,100,.36)"></div><div style="left:227px;top:116.20000000000005px;width:17.69999999999999px;height:7.0px;background:rgba(100,100,100,.36)"></div><div style="left:346.29999999999995px;top:116.20000000000005px;width:20.600000000000023px;height:7.0px;background:rgba(100,100,100,.36)"></div><div style="left:373.29999999999995px;top:116.20000000000005px;width:49.200000000000045px;height:7.0px;background:rgba(100,100,100,.36)"></div><div style="left:428.79999999999995px;top:116.20000000000005px;width:50.80000000000007px;height:7.0px;background:rgba(100,100,100,.36)"></div><div style="left:498.70000000000005px;top:116.20000000000005px;width:30.09999999999991px;height:7.0px;background:rgba(100,100,100,.36)"></div><div style="left:563.7px;top:116.20000000000005px;width:19.09999999999991px;height:7.0px;background:rgba(100,100,100,.36)"></div><div style="left:152.60000000000002px;top:116.20000000000005px;width:7.899999999999977px;height:7.0px;background:rgba(100,100,100,.36)"></div></div></div>
<div style="left:210px;top:626px;width:527px;height:2px;background:#d8d8d8"></div>
<svg style="position:absolute;left:211.0px;top:466px" width="5" height="8" viewBox="0 0 5 8"><path d="M1 2.8 L2.5 1.2 L4 2.8 M1 5.2 L2.5 6.8 L4 5.2" fill="none" stroke="#9aa0bc" stroke-width="0.9"/></svg>
<svg style="position:absolute;left:330.5px;top:466px" width="5" height="8" viewBox="0 0 5 8"><path d="M1 2.8 L2.5 1.2 L4 2.8 M1 5.2 L2.5 6.8 L4 5.2" fill="none" stroke="#9aa0bc" stroke-width="0.9"/></svg>
<svg style="position:absolute;left:386.0px;top:466px" width="5" height="8" viewBox="0 0 5 8"><path d="M1 2.8 L2.5 1.2 L4 2.8 M1 5.2 L2.5 6.8 L4 5.2" fill="none" stroke="#9aa0bc" stroke-width="0.9"/></svg>
<svg style="position:absolute;left:419.8px;top:466px" width="5" height="8" viewBox="0 0 5 8"><path d="M1 2.8 L2.5 1.2 L4 2.8 M1 5.2 L2.5 6.8 L4 5.2" fill="none" stroke="#9aa0bc" stroke-width="0.9"/></svg>
<svg style="position:absolute;left:451.5px;top:466px" width="5" height="8" viewBox="0 0 5 8"><path d="M1 2.8 L2.5 1.2 L4 2.8 M1 5.2 L2.5 6.8 L4 5.2" fill="none" stroke="#9aa0bc" stroke-width="0.9"/></svg>
<svg style="position:absolute;left:524.0px;top:466px" width="5" height="8" viewBox="0 0 5 8"><path d="M1 2.8 L2.5 1.2 L4 2.8 M1 5.2 L2.5 6.8 L4 5.2" fill="none" stroke="#9aa0bc" stroke-width="0.9"/></svg>
<svg style="position:absolute;left:575.1px;top:466px" width="5" height="8" viewBox="0 0 5 8"><path d="M1 2.8 L2.5 1.2 L4 2.8 M1 5.2 L2.5 6.8 L4 5.2" fill="none" stroke="#9aa0bc" stroke-width="0.9"/></svg>
<svg style="position:absolute;left:631.0px;top:466px" width="5" height="8" viewBox="0 0 5 8"><path d="M1 2.8 L2.5 1.2 L4 2.8 M1 5.2 L2.5 6.8 L4 5.2" fill="none" stroke="#9aa0bc" stroke-width="0.9"/></svg>
<svg style="position:absolute;left:687.5px;top:466px" width="5" height="8" viewBox="0 0 5 8"><path d="M1 2.8 L2.5 1.2 L4 2.8 M1 5.2 L2.5 6.8 L4 5.2" fill="none" stroke="#9aa0bc" stroke-width="0.9"/></svg>
<svg style="position:absolute;left:737.1px;top:466px" width="5" height="8" viewBox="0 0 5 8"><path d="M1 2.8 L2.5 1.2 L4 2.8 M1 5.2 L2.5 6.8 L4 5.2" fill="none" stroke="#9aa0bc" stroke-width="0.9"/></svg>
<div class="t" style="left:257.6px;top:476.88px;font-size:11.6px;line-height:11.6px;transform:scaleX(0.8475);transform-origin:left center;color:#f0f2f8">Ville</div>
<svg style="position:absolute;left:316.8px;top:478.7px" width="10" height="10" viewBox="0 0 10 10"><path d="M0 0 H10 L6.2 4.8 V9.5 H3.8 V4.8 Z" fill="#fff"/></svg>
<div class="t" style="left:349px;top:478.19px;font-size:11px;line-height:11px;transform:scaleX(0.8564);transform-origin:left center;color:#f0f2f8">***</div>
<svg style="position:absolute;left:372.5px;top:478.7px" width="10" height="10" viewBox="0 0 10 10"><path d="M0 0 H10 L6.2 4.8 V9.5 H3.8 V4.8 Z" fill="#fff"/></svg>
<div class="t" style="left:390px;top:476.88px;font-size:11.6px;line-height:11.6px;transform:scaleX(0.8828);transform-origin:left center;color:#f0f2f8">Min</div>
<svg style="position:absolute;left:406.5px;top:479px" width="10" height="10" viewBox="0 0 10 10"><circle cx="6.2" cy="3.8" r="2.7" fill="none" stroke="#fff" stroke-width="1"/><path d="M4.3 5.7 L1 9" stroke="#fff" stroke-width="1.2"/></svg>
<div class="t" style="left:419px;top:476.88px;font-size:11.6px;line-height:11.6px;transform:scaleX(0.8671);transform-origin:left center;color:#f0f2f8">Max</div>
<svg style="position:absolute;left:438.5px;top:479px" width="10" height="10" viewBox="0 0 10 10"><circle cx="6.2" cy="3.8" r="2.7" fill="none" stroke="#fff" stroke-width="1"/><path d="M4.3 5.7 L1 9" stroke="#fff" stroke-width="1.2"/></svg>
<div class="t" style="left:466.3px;top:476.88px;font-size:11.6px;line-height:11.6px;transform:scaleX(0.8864);transform-origin:left center;color:#f0f2f8">Compte</div>
<svg style="position:absolute;left:510.8px;top:478.7px" width="10" height="10" viewBox="0 0 10 10"><path d="M0 0 H10 L6.2 4.8 V9.5 H3.8 V4.8 Z" fill="#fff"/></svg>
<div class="t" style="left:535.6px;top:476.88px;font-size:11.6px;line-height:11.6px;transform:scaleX(0.8612);transform-origin:left center;color:#f0f2f8">Taxe</div>
<svg style="position:absolute;left:562px;top:479px" width="10" height="10" viewBox="0 0 10 10"><circle cx="6.2" cy="3.8" r="2.7" fill="none" stroke="#fff" stroke-width="1"/><path d="M4.3 5.7 L1 9" stroke="#fff" stroke-width="1.2"/></svg>
<div class="t" style="left:593.4px;top:476.88px;font-size:11.6px;line-height:11.6px;transform:scaleX(0.8160);transform-origin:left center;color:#f0f2f8">Du</div>
<svg style="position:absolute;left:618.8px;top:479px" width="10" height="10" viewBox="0 0 10 10"><circle cx="6.2" cy="3.8" r="2.7" fill="none" stroke="#fff" stroke-width="1"/><path d="M4.3 5.7 L1 9" stroke="#fff" stroke-width="1.2"/></svg>
<div class="t" style="left:650.8px;top:476.88px;font-size:11.6px;line-height:11.6px;transform:scaleX(0.7894);transform-origin:left center;color:#f0f2f8">Au</div>
<svg style="position:absolute;left:674.6px;top:479px" width="10" height="10" viewBox="0 0 10 10"><circle cx="6.2" cy="3.8" r="2.7" fill="none" stroke="#fff" stroke-width="1"/><path d="M4.3 5.7 L1 9" stroke="#fff" stroke-width="1.2"/></svg>
<div class="t" style="left:694px;top:470.18px;font-size:11.6px;line-height:11.6px;transform:scaleX(0.8693);transform-origin:left center;color:#f0f2f8">Taxe</div>
<div class="t" style="left:695px;top:484.58px;font-size:11.6px;line-height:11.6px;transform:scaleX(0.8899);transform-origin:left center;color:#f0f2f8">Max</div>
<svg style="position:absolute;left:725px;top:479px" width="10" height="10" viewBox="0 0 10 10"><circle cx="6.2" cy="3.8" r="2.7" fill="none" stroke="#fff" stroke-width="1"/><path d="M4.3 5.7 L1 9" stroke="#fff" stroke-width="1.2"/></svg>
<div class="t" style="left:745.7px;top:470.18px;font-size:11.6px;line-height:11.6px;transform:scaleX(0.8612);transform-origin:left center;color:#f0f2f8">Taxe</div>
<div class="t" style="left:746px;top:484.58px;font-size:11.6px;line-height:11.6px;transform:scaleX(0.9399);transform-origin:left center;color:#f0f2f8">Dép</div>
<svg style="position:absolute;left:778.3px;top:479px" width="10" height="10" viewBox="0 0 10 10"><circle cx="6.2" cy="3.8" r="2.7" fill="none" stroke="#fff" stroke-width="1"/><path d="M4.3 5.7 L1 9" stroke="#fff" stroke-width="1.2"/></svg>
<svg style="position:absolute;left:793px;top:478px" width="8" height="11" viewBox="0 0 8 11"><path d="M2 1 L6 5.5 L2 10" fill="none" stroke="#fff" stroke-width="1.3"/></svg>
<div style="left:811.6px;top:463.7px;width:93.89999999999998px;height:22.0px;background:#6b6e79;border-radius:4px"></div>
<div class="t" style="left:840.9px;top:468.48px;font-size:11.6px;line-height:11.6px;transform:scaleX(0.9605);transform-origin:left center;color:#f4f4f8">Ajouter</div>
<div style="left:811.6px;top:492px;width:93.89999999999998px;height:22px;background:#6b6e79;border-radius:4px"></div>
<div class="t" style="left:838.8px;top:496.68px;font-size:11.6px;line-height:11.6px;transform:scaleX(0.9235);transform-origin:left center;color:#f4f4f8">Modifier</div>
<div style="left:811.6px;top:520.2px;width:93.89999999999998px;height:22.0px;background:#cc2127;border-radius:4px"></div>
<div class="t" style="left:835px;top:524.88px;font-size:11.6px;line-height:11.6px;transform:scaleX(0.8616);transform-origin:left center;color:#f4f4f8">Supprimer</div>
<div style="left:811.6px;top:614px;width:93.89999999999998px;height:22.299999999999955px;background:#6b6e79;border-radius:4px"></div>
<div class="t" style="left:835.9px;top:618.98px;font-size:11.6px;line-height:11.6px;transform:scaleX(0.8782);transform-origin:left center;color:#f4f4f8">Dupliquer</div>
<div style="left:214.5px;top:12.5px;width:87.0px;height:35.5px;border:5px solid #8ad13b;border-radius:6px;box-sizing:border-box;box-shadow:0 0 2px rgba(0,0,0,.25)"></div>
<div style="left:1px;top:81px;width:96.5px;height:35.8px;border:4.2px solid #8ad13b;border-radius:6px;box-sizing:border-box;box-shadow:0 0 2px rgba(0,0,0,.25)"></div>
<div style="left:465.8px;top:113.2px;width:78.99999999999994px;height:33.8px;border:4.2px solid #8ad13b;border-radius:6px;box-sizing:border-box;box-shadow:inset 0 0 5px rgba(0,0,0,.22), 0 1px 3px rgba(0,0,0,.15)"></div>
<div style="left:185px;top:262px;width:219.5px;height:53.5px;border:4.2px solid #8ad13b;border-radius:6px;box-sizing:border-box;box-shadow:inset 0 0 6px rgba(0,0,0,.22), 0 1px 3px rgba(0,0,0,.15)"></div>
</body></html>
